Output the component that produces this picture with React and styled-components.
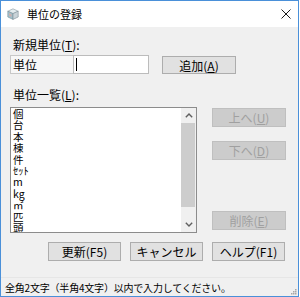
import React from 'react';
import styled, { createGlobalStyle } from 'styled-components';

const GlobalStyle = createGlobalStyle`
  html, body {
    margin: 0;
    padding: 0;
    background: #ffffff;
  }
  body {
    font-family: "Noto Sans CJK JP", "Noto Sans", sans-serif;
    font-size: 12px;
    color: #000000;
  }
`;

const units = ['個', '台', '本', '棟', '件', 'ｾｯﾄ', 'm', 'kg', '㎡', '匹', '頭'];

const AppIcon = () => (
  <svg width="12" height="12" viewBox="0 0 12 12">
    <path d="M6 0.8 L11.2 3.2 L6 5.6 L0.8 3.2 Z" fill="#e4ecef" stroke="#8a9aa2" strokeWidth="0.6" />
    <path d="M0.8 3.2 L6 5.6 L6 11.4 L0.8 9 Z" fill="#9fc3cf" stroke="#7d8f97" strokeWidth="0.6" />
    <path d="M6 5.6 L11.2 3.2 L11.2 9 L6 11.4 Z" fill="#c9d3d8" stroke="#7d8f97" strokeWidth="0.6" />
    <path d="M2 5 L4.6 6.2 L4.6 9 L2 7.8 Z" fill="#e7a39a" opacity="0.6" />
  </svg>
);

const CloseIcon = () => (
  <svg width="10" height="10" viewBox="0 0 10 10">
    <path d="M0.5 0.5 L9.5 9.5 M9.5 0.5 L0.5 9.5" stroke="#1a1a1a" strokeWidth="1" />
  </svg>
);

const Chevron = ({ down }) => (
  <svg width="8" height="5" viewBox="0 0 8 5">
    <path
      d={down ? 'M0.8 0.8 L4 4 L7.2 0.8' : 'M0.8 4.2 L4 1 L7.2 4.2'}
      stroke="#606060"
      strokeWidth="1.4"
      fill="none"
    />
  </svg>
);

export default function App() {
  return (
    <>
      <GlobalStyle />
      <Window>
        <TitleBar>
          <AppIcon />
          <Title>単位の登録</Title>
          <CloseButton>
            <CloseIcon />
          </CloseButton>
        </TitleBar>
        <Body>
          <FieldLabel $top={11}>
            新規単位(<u>T</u>):
          </FieldLabel>
          <InputRow>
            <UnitCaption>単位</UnitCaption>
            <TextBox>
              <Caret />
            </TextBox>
            <AddButton>
              追加(<u>A</u>)
            </AddButton>
          </InputRow>
          <FieldLabel $top={14}>
            単位一覧(<u>L</u>):
          </FieldLabel>
          <ListRow>
            <ListBox>
              <Items>
                {units.map(u => (
                  <Item key={u}>{u}</Item>
                ))}
              </Items>
              <ScrollBar>
                <ArrowBox>
                  <Chevron />
                </ArrowBox>
                <Track>
                  <Thumb />
                </Track>
                <ArrowBox>
                  <Chevron down />
                </ArrowBox>
              </ScrollBar>
            </ListBox>
            <SideButtons>
              <Button $disabled>
                上へ(<u>U</u>)
              </Button>
              <Button $disabled>
                下へ(<u>D</u>)
              </Button>
              <Button $disabled $push>
                削除(<u>E</u>)
              </Button>
            </SideButtons>
          </ListRow>
          <BottomRow>
            <Button>更新(F5)</Button>
            <Button>キャンセル</Button>
            <Button>ヘルプ(F1)</Button>
          </BottomRow>
        </Body>
        <StatusBar>
          <StatusText>全角2文字（半角4文字）以内で入力してください。</StatusText>
          <Grip>
            <svg width="7" height="7" viewBox="0 0 7 7">
              <rect x="5" y="1" width="1.5" height="1.5" fill="#a8a8a8" />
              <rect x="3" y="3" width="1.5" height="1.5" fill="#a8a8a8" />
              <rect x="5" y="3" width="1.5" height="1.5" fill="#a8a8a8" />
              <rect x="1" y="5" width="1.5" height="1.5" fill="#a8a8a8" />
              <rect x="3" y="5" width="1.5" height="1.5" fill="#a8a8a8" />
              <rect x="5" y="5" width="1.5" height="1.5" fill="#a8a8a8" />
            </svg>
          </Grip>
        </StatusBar>
      </Window>
    </>
  );
}

const Window = styled.div`
  width: 299px;
  height: 297px;
  box-sizing: border-box;
  border: 1px solid #4a90d9;
  display: flex;
  flex-direction: column;
  background: #f0f0f0;
`;

const TitleBar = styled.div`
  height: 26px;
  display: flex;
  align-items: center;
  padding-left: 6px;
  background: #ffffff;
`;

const Title = styled.span`
  margin-left: 8px;
  font-size: 11px;
  color: #000000;
`;

const CloseButton = styled.span`
  margin-left: auto;
  margin-right: 7px;
  display: flex;
`;

const Body = styled.div`
  flex: 1;
  display: flex;
  flex-direction: column;
  padding-left: 9px;
  background: #f0f0f0;
`;

const FieldLabel = styled.div`
  margin-top: ${p => p.$top}px;
  padding-left: 3px;
  height: 14px;
  line-height: 14px;
  font-size: 12px;
`;

const InputRow = styled.div`
  margin-top: 3px;
  display: flex;
  align-items: flex-start;
`;

const UnitCaption = styled.div`
  width: 63px;
  height: 19px;
  box-sizing: border-box;
  border: 1px solid #c8c8c8;
  border-right: none;
  background: #f7f7f7;
  padding-left: 2px;
  line-height: 17px;
  font-size: 12px;
`;

const TextBox = styled.div`
  width: 76px;
  height: 19px;
  box-sizing: border-box;
  border: 1px solid #bcbcbc;
  background: #ffffff;
  display: flex;
  align-items: center;
  padding-left: 2px;
`;

const Caret = styled.span`
  width: 1px;
  height: 13px;
  background: #000000;
`;

const Button = styled.div`
  width: 73px;
  height: 19px;
  box-sizing: border-box;
  border: 1px solid ${p => (p.$disabled ? '#bfbfbf' : '#adadad')};
  background: ${p => (p.$disabled ? '#cccccc' : '#e1e1e1')};
  color: ${p => (p.$disabled ? '#a0a0a0' : '#000000')};
  display: flex;
  align-items: center;
  justify-content: center;
  font-size: 12px;
  line-height: 17px;
  margin-top: ${p => (p.$push ? 'auto' : '0')};

  u {
    text-decoration-thickness: 1px;
    text-underline-offset: 1px;
  }
`;

const AddButton = styled(Button)`
  margin-left: 13px;
  margin-top: 1px;
  width: 74px;
  height: 18px;
`;

const ListRow = styled.div`
  margin-top: 5px;
  display: flex;
  height: 126px;
`;

const ListBox = styled.div`
  width: 187px;
  box-sizing: border-box;
  border: 1px solid #8c8c8c;
  background: #ffffff;
  display: flex;
`;

const Items = styled.div`
  flex: 1;
  padding-left: 2px;
  overflow: hidden;
`;

const Item = styled.div`
  font-size: 10.5px;
  line-height: 11.4px;
  height: 11.4px;
  white-space: nowrap;
`;

const ScrollBar = styled.div`
  width: 15px;
  display: flex;
  flex-direction: column;
  background: #f0f0f0;
`;

const ArrowBox = styled.div`
  height: 15px;
  display: flex;
  align-items: center;
  justify-content: center;
`;

const Track = styled.div`
  flex: 1;
`;

const Thumb = styled.div`
  height: 84px;
  margin-right: 1px;
  background: #cdcdcd;
`;

const SideButtons = styled.div`
  margin-left: 15px;
  padding: 1px 0 3px;
  display: flex;
  flex-direction: column;
  gap: 14px;

  & > div {
    width: 74px;
  }
`;

const BottomRow = styled.div`
  margin-top: 9px;
  padding-left: 38px;
  display: flex;
  gap: 9px;
`;

const StatusBar = styled.div`
  height: 19px;
  box-sizing: border-box;
  border-top: 1px solid #e6e6e6;
  display: flex;
  align-items: center;
  padding-left: 4px;
  background: #f0f0f0;
`;

const StatusText = styled.span`
  font-size: 10px;
  letter-spacing: -0.2px;
  white-space: nowrap;
`;

const Grip = styled.span`
  margin-left: auto;
  margin-right: 1px;
  align-self: flex-end;
  display: flex;
  padding-bottom: 1px;
`;
